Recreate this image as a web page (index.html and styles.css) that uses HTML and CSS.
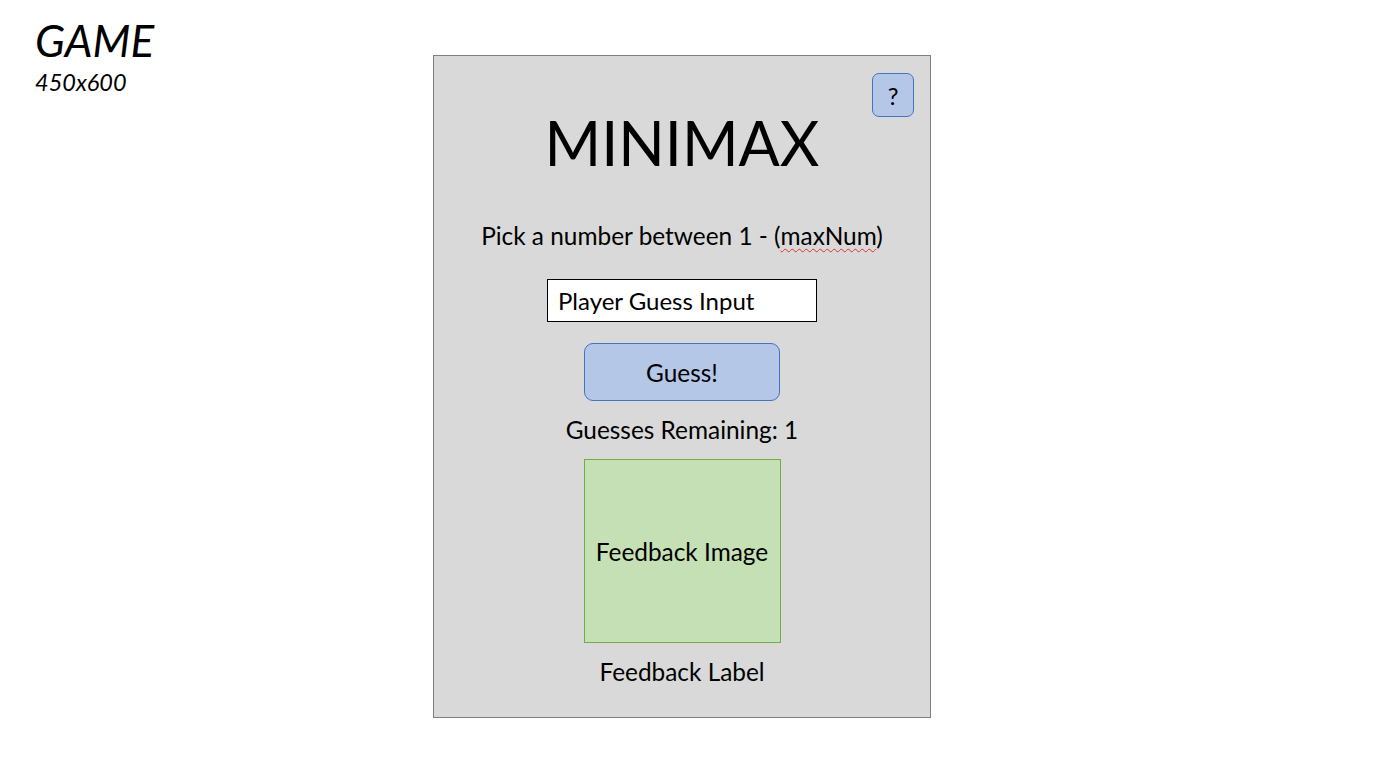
FILE: index.html
```html
<!DOCTYPE html>
<html>
<head>
<meta charset="utf-8">
<link rel="stylesheet" href="styles.css">
</head>
<body>
<div class="slide">
  <div class="caption">
    <div class="cap-title">GAME</div>
    <div class="cap-size">450x600</div>
  </div>
  <div class="panel">
    <div class="help">?</div>
    <h1 class="title">MINIMAX</h1>
    <p class="prompt">Pick a number between 1 - (<span class="spell">maxNum</span>)</p>
    <div class="input">Player Guess Input</div>
    <div class="guess-btn">Guess!</div>
    <p class="remaining">Guesses Remaining: 1</p>
    <div class="feedback-img">Feedback Image</div>
    <p class="feedback-label">Feedback Label</p>
  </div>
</div>
</body>
</html>
```

FILE: styles.css
```css
html, body {
  margin: 0;
  padding: 0;
  background: #ffffff;
}
body {
  font-family: Lato, "Open Sans", sans-serif;
  color: #000;
}
.slide {
  display: flex;
  align-items: flex-start;
  padding-left: 35px;
  height: 784px;
  box-sizing: border-box;
}
.caption {
  width: 398px;
  padding-top: 16px;
  font-style: italic;
}
.cap-title {
  font-size: 44px;
  line-height: 48px;
}
.cap-size {
  font-size: 23.5px;
  line-height: 28px;
  margin-top: 4px;
}
.panel {
  position: relative;
  margin-top: 55px;
  width: 498px;
  height: 663px;
  box-sizing: border-box;
  background: #d9d9d9;
  border: 1px solid #7f7f7f;
  display: flex;
  flex-direction: column;
  align-items: center;
}
.help {
  position: absolute;
  top: 17px;
  right: 16px;
  width: 42px;
  height: 44px;
  box-sizing: border-box;
  background: #b4c7e7;
  border: 1px solid #4472c4;
  border-radius: 7px;
  display: flex;
  align-items: center;
  justify-content: center;
  font-size: 24px;
}
.title {
  margin: 47px 0 0;
  font-weight: 400;
  font-size: 61px;
  line-height: 80px;
}
.prompt {
  margin: 38px 0 0;
  font-size: 24.4px;
  line-height: 30px;
}
.spell {
  text-decoration: underline wavy #e03030;
  text-decoration-thickness: 1px;
  text-underline-offset: 3px;
}
.input {
  margin-top: 28px;
  width: 270px;
  height: 43px;
  box-sizing: border-box;
  background: #fff;
  border: 1px solid #000;
  padding-left: 10px;
  font-size: 24px;
  line-height: 41px;
}
.guess-btn {
  margin-top: 21px;
  width: 196px;
  height: 58px;
  box-sizing: border-box;
  background: #b4c7e7;
  border: 1px solid #4472c4;
  border-radius: 9px;
  display: flex;
  align-items: center;
  justify-content: center;
  font-size: 24.4px;
}
.remaining {
  margin: 14px 0 0;
  font-size: 24.4px;
  line-height: 30px;
}
.feedback-img {
  margin-top: 14px;
  width: 197px;
  height: 184px;
  box-sizing: border-box;
  background: #c5e0b4;
  border: 1px solid #70ad47;
  display: flex;
  align-items: center;
  justify-content: center;
  font-size: 24.4px;
}
.feedback-label {
  margin: 14px 0 0;
  font-size: 24.4px;
  line-height: 30px;
}
```
